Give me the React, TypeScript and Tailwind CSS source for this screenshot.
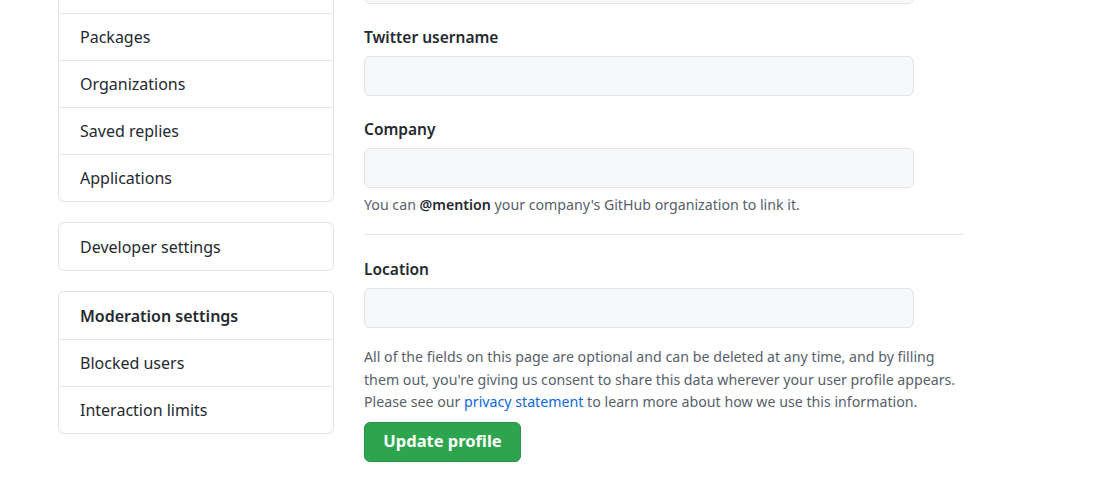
import React from "react";

const font = { fontFamily: '"Noto Sans", "Liberation Sans", sans-serif' };

function Row({ children, bold, first }: { children?: React.ReactNode; bold?: boolean; first?: boolean }) {
  return (
    <div
      className={`h-[47px] ${first ? "" : "border-t border-[#e6e8eb]"} flex items-center pl-[21px] text-[16px] text-[#24292f] ${bold ? "font-semibold" : ""}`}
    >
      {children}
    </div>
  );
}

function Field({ label, first }: { label?: string; first?: boolean }) {
  return (
    <div className={first ? "" : "mt-[21px]"}>
      {label && <div className="h-[24px] leading-[24px] text-[15.5px] font-semibold text-[#24292f]">{label}</div>}
      <div className={`${label ? "mt-[7px]" : ""} h-[40px] w-[550px] rounded-[6px] border border-[#e1e4e8] bg-[#f7f8fa]`} />
    </div>
  );
}

export default function App() {
  return (
    <div className="w-[1101px] h-[496px] overflow-hidden bg-white" style={font}>
      <div className="flex pl-[58px] gap-[30px]">
        <div className="w-[276px] mt-[-35px] flex flex-col gap-[20px]">
          <div className="rounded-[6px] border border-[#e1e4e8]">
            <Row first>Emails</Row>
            <Row>Packages</Row>
            <Row>Organizations</Row>
            <Row>Saved replies</Row>
            <Row>Applications</Row>
          </div>
          <div className="rounded-[6px] border border-[#e1e4e8]">
            <Row first>Developer settings</Row>
          </div>
          <div className="rounded-[6px] border border-[#e1e4e8]">
            <Row first bold>Moderation settings</Row>
            <Row>Blocked users</Row>
            <Row>Interaction limits</Row>
          </div>
        </div>
        <div className="w-[599px] mt-[-36px]">
          <Field first />
          <Field label="Twitter username" />
          <Field label="Company" />
          <div className="mt-[6px] text-[14.2px] leading-[21px] text-[#57606a]">
            You can <span className="font-semibold text-[#24292f]">@mention</span> your company's GitHub organization to link it.
          </div>
          <div className="mt-[19px] border-t border-[#e6e8eb]" />
          <div className="mt-[22px]">
            <div className="h-[24px] leading-[24px] text-[15.5px] font-semibold text-[#24292f]">Location</div>
            <div className="mt-[7px] h-[40px] w-[550px] rounded-[6px] border border-[#e1e4e8] bg-[#f7f8fa]" />
          </div>
          <p className="mt-[18px] w-[599px] text-[14.2px] leading-[22.5px] text-[#57606a]">
            All of the fields on this page are optional and can be deleted at any time, and by filling them out, you're giving us consent to share this data wherever your user profile appears. Please see our{" "}
            <span className="text-[#0969da]">privacy statement</span> to learn more about how we use this information.
          </p>
          <button className="mt-[8px] h-[40px] w-[157px] rounded-[6px] bg-[#2da44e] border border-[#2a9147] text-white text-[16.5px] font-bold flex items-center justify-center">
            Update profile
          </button>
        </div>
      </div>
    </div>
  );
}
